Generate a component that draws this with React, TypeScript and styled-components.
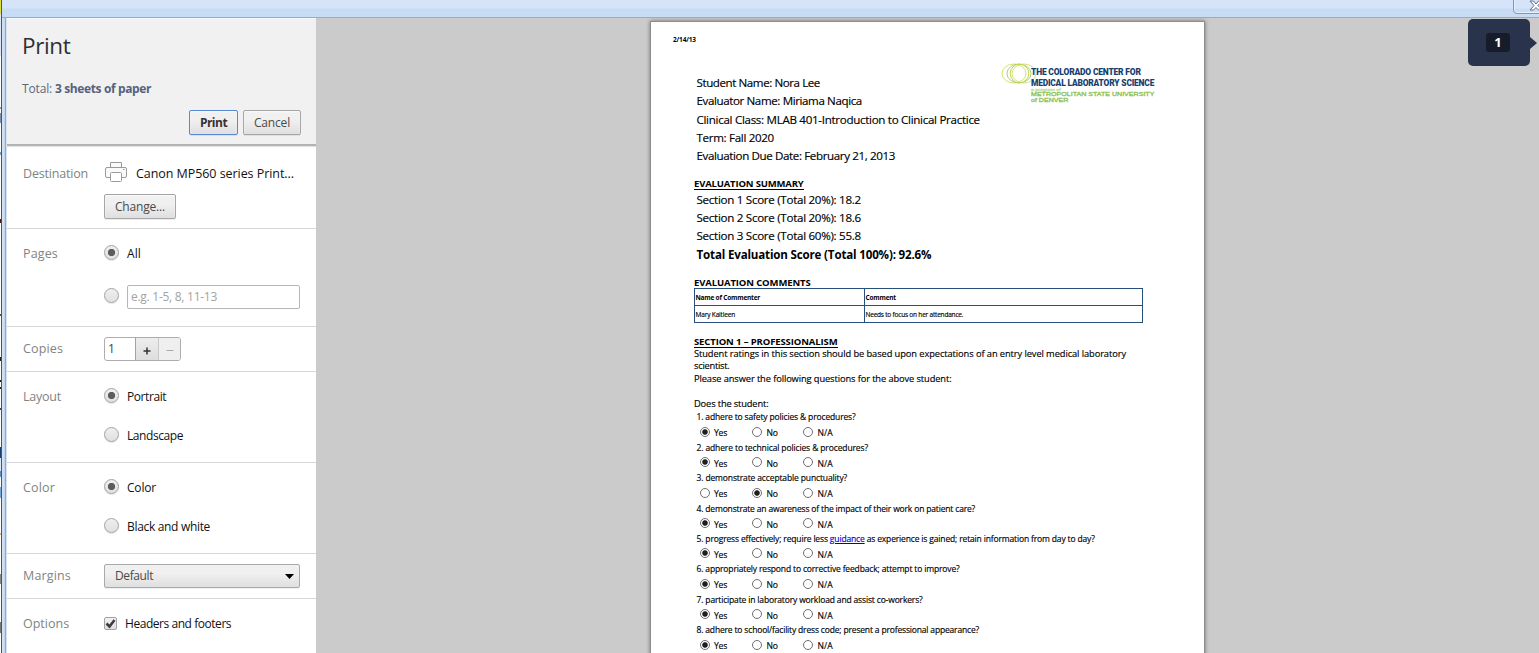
import React from 'react';
import styled, { createGlobalStyle, css } from 'styled-components';

const GlobalStyle = createGlobalStyle`
  * { box-sizing: border-box; }
  body { margin: 0; background: #fff; overflow: hidden; font-family: 'Open Sans', sans-serif; }
`;

/* ---------- window frame ---------- */

const Window = styled.div`
  position: relative;
  display: flex;
  width: 1539px;
  height: 653px;
  overflow: hidden;
`;

const Desktop = styled.div`
  flex: none;
  width: 1px;
  background: linear-gradient(
    #e0e33c 0 14px, #dfe8f2 14px 56px, #fff 56px 107px, #999 107px 109px, #fff 109px 113px,
    #7c8fa8 113px 123px, #fff 123px 152px, #7da0c8 152px 155px, #fff 155px 219px, #401a10 219px 223px,
    #fff 223px 314px, #555 314px 316px, #fff 316px 357px, #222 357px 361px, #fff 361px 380px, #222 380px 382px,
    #fff 382px 387px, #222 387px 389px, #fff 389px 408px, #44486a 408px 410px, #fff 410px 447px,
    #17406f 447px 458px, #dce8f4 458px 471px, #5d8fc2 471px 477px, #fff 477px 487px, #76a9d8 487px 498px,
    #fff 498px 533px, #e6b56d 533px 535px, #fff 535px 574px, #888 574px 584px, #fff 584px 622px, #777 622px 633px, #fff 633px
  );
`;

const Frame = styled.div`
  flex: 1;
  display: flex;
  flex-direction: column;
  min-width: 0;
  border-left: 1px solid #3c5878;
`;

const TitleBar = styled.div`
  flex: none;
  height: 18px;
  background: linear-gradient(#d5e4f8 0 8px, #c8dcf6 9px);
  border-bottom: 1px solid #97abc8;
`;

const Body = styled.div`
  flex: 1;
  display: flex;
  min-height: 0;
  padding-left: 5px;
  background: linear-gradient(90deg, #cfe0f4 0 2px, #c3d5ea 2px 3px, #8fabd0 3px 4px, #d3e1f2 4px 5px, #cbcbcb 5px);
`;

const CloseButton = styled.div`
  position: absolute;
  top: -4px;
  left: 1513px;
  width: 40px;
  height: 18px;
  border: 1px solid #8497b4;
  border-radius: 4px;
  box-shadow: inset 0 0 0 1px #e4effc;

  svg { position: absolute; left: 15px; top: 3px; }
`;

/* ---------- text ---------- */

interface TextProps { $size?: number; $ls?: number; $bold?: boolean; $color?: string; $lh?: number }

const Text = styled.span<TextProps>`
  display: inline-block;
  white-space: pre;
  font-size: ${p => p.$size ?? 12}px;
  line-height: ${p => p.$lh ?? 20}px;
  letter-spacing: ${p => p.$ls ?? 0}px;
  font-weight: ${p => (p.$bold ? 700 : 400)};
  color: ${p => p.$color ?? '#111'};
`;

/* ---------- print settings ---------- */

const Sidebar = styled.aside`
  flex: none;
  width: 309px;
  display: flex;
  flex-direction: column;
  background: #fff;
`;

const Header = styled.header`
  flex: none;
  height: 128px;
  padding: 12px 15px 0;
  background: #f1f1f1;
  border-top: 1px solid #f7f9fc;
  border-bottom: 2px solid #b3b3b3;
  box-shadow: 0 1px 1px #e4e4e4;
  display: flex;
  flex-direction: column;
`;

const Title = styled.h1`
  margin: 0;
  font-size: 22.500px;
  font-weight: 400;
  line-height: 30px;
  letter-spacing: -0.350px;
  color: #2f2f33;
`;

const Summary = styled.div`
  margin-top: 19px;
  height: 16px;
  display: flex;
  gap: 3px;
`;

const Actions = styled.div`
  display: flex;
  justify-content: flex-end;
  gap: 5px;
  margin-top: 14px;
`;

const Button = styled.button<{ $width: number; $primary?: boolean }>`
  width: ${p => p.$width}px;
  height: 25px;
  padding: 0;
  display: flex;
  align-items: center;
  justify-content: center;
  font-family: inherit;
  background: linear-gradient(#f0f0f0 38%, #dfdfdf);
  border: 1px solid ${p => (p.$primary ? '#5a86d6' : '#a6a6a6')};
  border-radius: 2px;
  box-shadow: 0 1px 0 rgba(0, 0, 0, 0.07), inset 0 1px 2px rgba(255, 255, 255, 0.75);
`;

const Section = styled.section<{ $height: number; $top: number }>`
  flex: none;
  height: ${p => p.$height}px;
  padding: ${p => p.$top}px 0 0 16px;
  display: grid;
  grid-template-columns: 81px 1fr;
  align-items: start;
  border-bottom: 1px solid #d8d8d8;
`;

const Label = styled.div<{ $offset?: number }>`
  display: flex;
  padding-top: ${p => p.$offset ?? 1}px;
`;

const Fields = styled.div<{ $gap: number }>`
  display: flex;
  flex-direction: column;
  gap: ${p => p.$gap}px;
`;

const Option = styled.label`
  display: flex;
  align-items: center;
  gap: 8px;
  height: 20px;

  > ${Text} { padding-top: 1px; }
`;

const Radio = styled.span<{ $on?: boolean }>`
  flex: none;
  width: 15px;
  height: 15px;
  margin-top: -1px;
  border: 1px solid #a3a3a3;
  border-radius: 50%;
  background: ${p => (p.$on ? 'radial-gradient(circle, #5c5c5c 0 3.3px, transparent 4px), ' : '')}
    linear-gradient(#efefef, #e0e0e0);
  box-shadow: 0 1px 1px rgba(0, 0, 0, 0.1);
`;

const RangeInput = styled.div`
  display: flex;
  align-items: center;
  width: 173px;
  height: 24px;
  padding: 0 3px;
  margin-top: 1px;
  border: 1px solid #b6b6b6;
  border-radius: 2px;
`;

const Stepper = styled.div`
  display: grid;
  grid-template-columns: 30px 23px 22px;
  width: 77px;
  height: 24px;
  border: 1px solid #adadad;
  border-radius: 3px;
  overflow: hidden;
`;

const StepValue = styled.div`
  display: flex;
  padding: 1px 3px 0;
`;

const Step = styled.div<{ $disabled?: boolean }>`
  display: flex;
  align-items: center;
  justify-content: center;
  padding-top: 3px;
  border-left: 1px solid ${p => (p.$disabled ? '#c9c9c9' : '#a3a3a3')};
  background: ${p => (p.$disabled ? '#efefef' : 'linear-gradient(#ededed, #dedede)')};
`;

const Select = styled.div`
  display: flex;
  justify-content: space-between;
  align-items: center;
  width: 196px;
  height: 24px;
  padding: 0 5px 0 10px;
  border: 1px solid #a9a9a9;
  border-radius: 2px;
  background: linear-gradient(#f0f0f0 38%, #dfdfdf);
  box-shadow: 0 1px 0 rgba(0, 0, 0, 0.06);
`;

const CheckBox = styled.span`
  flex: none;
  width: 13px;
  height: 13px;
  border: 1px solid #a3a3a3;
  border-radius: 2px;
  background: linear-gradient(#f1f1f1, #dfdfdf);
  svg { display: block; }
`;

const GREY = '#808482';

const PrinterIcon = () => (
  <svg width="24" height="22" viewBox="0 0 24 22" fill="#fafafa" stroke="#9a9a9a">
    <path d="M6.500 6V.5h11V6" />
    <path d="M3 5.500H21Q22.500 5.500 22.500 7V14Q22.500 15.500 21 15.500H3Q1.500 15.500 1.500 14V7Q1.500 5.500 3 5.500Z" />
    <rect x="6.500" y="10.500" width="11" height="9" rx="1" fill="#fff" />
    <path d="M19 7.500h1.500" />
  </svg>
);

/* ---------- preview ---------- */

const Preview = styled.main`
  flex: 1;
  background: #cbcbcb;
  padding: 4px 0 0 335px;
  overflow: hidden;
`;

const Sheet = styled.article`
  width: 553px;
  height: 720px;
  padding: 13px 0 0 43px;
  background: #fff;
  box-shadow: 0 0 0 1px #8d8d8d, 0 0 4px 1px rgba(0, 0, 0, 0.45);
`;

const Copy = styled(Text)`
  color: #000;
  -webkit-text-stroke: ${p => (p.$bold ? 0 : 0.15)}px #000;
`;

const PrintDate = styled.div`
  height: 10px;
  margin-left: -21px;
  display: flex;
`;

const Intro = styled.div`
  display: flex;
  margin-top: 29.200px;
  height: 91px;
`;

const Lines = styled.div`
  display: flex;
  flex-direction: column;
  align-items: flex-start;
`;

const InfoLines = styled(Lines)`
  flex: none;
  width: 307px;
  padding-left: 2.500px;
`;

const ScoreLines = styled(Lines)`
  margin-top: 1px;
  padding-left: 2.500px;
`;

const Logo = styled.div`
  display: flex;
  width: 160px;
  height: 42px;
  margin-top: -13.500px;
`;

const Rings = styled.svg`
  flex: none;
  width: 37px;
  height: 24px;
  margin-right: -7px;
`;

const LogoText = styled.div`
  display: flex;
  flex-direction: column;
  padding-top: 5.500px;
`;

const LogoName = styled.span<{ $stretch: number }>`
  height: 10.800px;
  font: 900 9.800px/11px Roboto, sans-serif;
  letter-spacing: -0.200px;
  color: #14406f;
  white-space: nowrap;
  transform: scaleX(${p => p.$stretch});
  transform-origin: left;
`;

const LogoSub = styled.span<{ $size: number; $height: number; $color: string }>`
  height: ${p => p.$height}px;
  font: 400 ${p => p.$size}px/${p => p.$height}px 'Liberation Sans', sans-serif;
  -webkit-text-stroke: 0.300px ${p => p.$color};
  color: ${p => p.$color};
  white-space: nowrap;
  transform: scaleX(1.22);
  transform-origin: left;
`;

const Heading = styled.h2<{ $ls: number; $top: number; $bottom?: number }>`
  width: max-content;
  height: 12px;
  margin: ${p => p.$top}px 0 ${p => p.$bottom ?? 0}px;
  font-size: 9.500px;
  line-height: 12px;
  font-weight: 700;
  letter-spacing: ${p => p.$ls}px;
  color: #000;
  border-bottom: 1px solid #000;
`;

const Comments = styled.div`
  display: grid;
  grid-template-columns: 170px 278px;
  grid-template-rows: 17px 17px;
  width: 449px;
  border: solid #28507c;
  border-width: 1px 0 0 1px;
`;

const Cell = styled.div`
  display: flex;
  padding-left: 0.500px;
  border: solid #28507c;
  border-width: 0 1px 1px 0;
`;

const Question = styled.div`
  height: 30.450px;
  padding-left: 2.500px;
`;

const QuestionText = styled.div`
  height: 14px;
  display: flex;
`;

const Choices = styled.div`
  display: grid;
  grid-template-columns: 52.500px 51px 40px;
  padding-left: 3px;
`;

const Choice = styled.div`
  display: flex;
  align-items: flex-start;
  height: 16px;
`;

const Dot = styled.span<{ $on: boolean }>`
  flex: none;
  width: 10px;
  height: 10px;
  margin: 2.500px 4.500px 0 0;
  border: 1px solid #6f6f6f;
  border-radius: 50%;
  ${p => p.$on && css`background: radial-gradient(circle, #1e1e1e 0 2.300px, #fff 3.200px);`}
`;

const Link = styled.a`
  color: #0000d8;
  -webkit-text-stroke-color: #0000d8;
  text-decoration: underline;
`;

const PageBadge = styled.div`
  position: absolute;
  left: 1468px;
  top: 19px;
  width: 62px;
  height: 47px;
  display: flex;
  align-items: center;
  justify-content: center;
  background: #29344c;
  border-radius: 5px;

  &::after {
    content: '';
    position: absolute;
    left: 100%;
    top: 18px;
    border: solid transparent;
    border-width: 6px 0 6px 7px;
    border-left-color: #29344c;
  }
`;

const PageNumber = styled.div`
  width: 24px;
  height: 19px;
  margin-left: -2px;
  text-align: center;
  font-size: 13px;
  line-height: 19px;
  font-weight: 700;
  color: #fff;
  background: #161c2a;
  border-radius: 3px;
`;

const info: [string, number][] = [
  ['Student Name: Nora Lee', -0.43],
  ['Evaluator Name: Miriama Naqica', -0.397],
  ['Clinical Class: MLAB 401-Introduction to Clinical Practice', -0.305],
  ['Term: Fall 2020', -0.32],
  ['Evaluation Due Date: February 21, 2013', -0.388],
];

const scores = [
  'Section 1 Score (Total 20%): 18.2',
  'Section 2 Score (Total 20%): 18.6',
  'Section 3 Score (Total 60%): 55.8',
];

const intro: [string, number][] = [
  ['Student ratings in this section should be based upon expectations of an entry level medical laboratory', -0.084],
  ['scientist.', -0.252],
  ['Please answer the following questions for the above student:', -0.103],
  [' ', 0],
  ['Does the student:', -0.14],
];

const questions: { text: React.ReactNode; ls: number; answer: number }[] = [
  { text: '1. adhere to safety policies & procedures?', ls: -0.147, answer: 0 },
  { text: '2. adhere to technical policies & procedures?', ls: -0.12, answer: 0 },
  { text: '3. demonstrate acceptable punctuality?', ls: -0.132, answer: 1 },
  { text: '4. demonstrate an awareness of the impact of their work on patient care?', ls: -0.166, answer: 0 },
  {
    text: <>5. progress effectively; require less <Link>guidance</Link> as experience is gained; retain information from day to day?</>,
    ls: -0.152,
    answer: 0,
  },
  { text: '6. appropriately respond to corrective feedback; attempt to improve?', ls: -0.148, answer: 0 },
  { text: '7. participate in laboratory workload and assist co-workers?', ls: -0.152, answer: 0 },
  { text: '8. adhere to school/facility dress code; present a professional appearance?', ls: -0.167, answer: 0 },
];

const choices: [string, number][] = [['Yes', -0.25], ['No', -0.1], ['N/A', 0.1]];

function Settings() {
  return (
    <Sidebar>
      <Header>
        <Title>Print</Title>
        <Summary>
          <Text $ls={-0.16} $lh={17} $color="#5b6880">Total:</Text>
          <Text $bold $ls={-0.38} $lh={17} $color="#55627d">3 sheets of paper</Text>
        </Summary>
        <Actions>
          <Button $width={49} $primary><Text $bold $ls={-0.5} $color="#333">Print</Text></Button>
          <Button $width={58}><Text $ls={-0.185} $color="#4a4a4a">Cancel</Text></Button>
        </Actions>
      </Header>

      <Section $height={83} $top={17}>
        <Label><Text $size={12.5} $ls={-0.19} $color={GREY}>Destination</Text></Label>
        <Fields $gap={11}>
          <Option><PrinterIcon /><Text $size={12.5} $ls={-0.06}>Canon MP560 series Print...</Text></Option>
          <Button $width={72}><Text $ls={-0.184} $color="#4a4a4a">Change...</Text></Button>
        </Fields>
      </Section>

      <Section $height={98} $top={14}>
        <Label><Text $size={12.5} $ls={0.15} $color={GREY}>Pages</Text></Label>
        <Fields $gap={23}>
          <Option><Radio $on /><Text $ls={0.1}>All</Text></Option>
          <Option><Radio /><RangeInput><Text $ls={-0.27} $color="#a3a3a3">e.g. 1-5, 8, 11-13</Text></RangeInput></Option>
        </Fields>
      </Section>

      <Section $height={45} $top={10}>
        <Label $offset={2}><Text $size={12.5} $ls={0.135} $color={GREY}>Copies</Text></Label>
        <Stepper>
          <StepValue><Text $color="#444">1</Text></StepValue>
          <Step><svg width="8" height="8"><path d="M.5 4h7M4 .5v7" stroke="#333" strokeWidth="1.500" /></svg></Step>
          <Step $disabled><svg width="8" height="8"><path d="M.5 3.500h7" stroke="#aaa" /></svg></Step>
        </Stepper>
      </Section>

      <Section $height={91} $top={14}>
        <Label><Text $size={12.5} $ls={-0.23} $color={GREY}>Layout</Text></Label>
        <Fields $gap={19}>
          <Option><Radio $on /><Text $ls={-0.42}>Portrait</Text></Option>
          <Option><Radio /><Text $ls={-0.42}>Landscape</Text></Option>
        </Fields>
      </Section>

      <Section $height={91} $top={14}>
        <Label><Text $size={12.5} $ls={0.16} $color={GREY}>Color</Text></Label>
        <Fields $gap={19}>
          <Option><Radio $on /><Text $ls={-0.19}>Color</Text></Option>
          <Option><Radio /><Text $ls={-0.32}>Black and white</Text></Option>
        </Fields>
      </Section>

      <Section $height={45} $top={10}>
        <Label $offset={2}><Text $size={12.5} $ls={0.16} $color={GREY}>Margins</Text></Label>
        <Select>
          <Text $ls={-0.4} $color="#4a4a4a">Default</Text>
          <svg width="9" height="5"><path d="M0 0h9L4.500 5z" fill="#000" /></svg>
        </Select>
      </Section>

      <Section $height={60} $top={14}>
        <Label><Text $size={12.5} $color={GREY}>Options</Text></Label>
        <Option>
          <CheckBox>
            <svg width="11" height="11"><path d="M1.500 5.500L4.500 8.500L9.500 2" fill="none" stroke="#3c3c3c" strokeWidth="2.500" /></svg>
          </CheckBox>
          <Text $ls={-0.45}>Headers and footers</Text>
        </Option>
      </Section>
    </Sidebar>
  );
}

function Document() {
  return (
    <Sheet>
      <PrintDate><Copy $size={6.5} $ls={-0.15} $lh={10} $bold>2/14/13</Copy></PrintDate>
      <Intro>
        <InfoLines>
          {info.map(([text, ls]) => <Copy key={text} $size={11.6} $ls={ls} $lh={18.25}>{text}</Copy>)}
        </InfoLines>
        <Logo>
          <Rings viewBox="0 0 37 24" fill="none" strokeWidth="1">
            <ellipse cx="13" cy="12.500" rx="12" ry="9.500" stroke="#d7e06a" />
            <ellipse cx="18" cy="12.500" rx="12" ry="9.500" stroke="#a9d08a" />
            <ellipse cx="23" cy="12.500" rx="12" ry="9.500" stroke="#dbe27a" />
            <circle cx="18.500" cy="12.500" r="9.300" stroke="#c3d648" />
          </Rings>
          <LogoText>
            <LogoName $stretch={0.86}>THE COLORADO CENTER FOR</LogoName>
            <LogoName $stretch={0.855}>MEDICAL LABORATORY SCIENCE</LogoName>
            <LogoSub $size={4.3} $height={4.5} $color="#c3dba0">a program of</LogoSub>
            <LogoSub $size={5.8} $height={5.5} $color="#8cc152">METROPOLITAN STATE UNIVERSITY</LogoSub>
            <LogoSub $size={5.8} $height={5} $color="#8cc152">of DENVER</LogoSub>
          </LogoText>
        </Logo>
      </Intro>

      <Heading $ls={-0.174} $top={12.55}>EVALUATION SUMMARY</Heading>
      <ScoreLines>
        {scores.map(text => <Copy key={text} $size={11.6} $ls={-0.29} $lh={18.25}>{text}</Copy>)}
        <Copy $bold $size={11.6} $ls={-0.18} $lh={19.5}>Total Evaluation Score (Total 100%): 92.6%</Copy>
      </ScoreLines>

      <Heading $ls={-0.124} $top={11.75} $bottom={-1}>EVALUATION COMMENTS</Heading>
      <Comments>
        <Cell><Copy $bold $size={6.5} $ls={-0.2} $lh={18}>Name of Commenter</Copy></Cell>
        <Cell><Copy $bold $size={6.5} $ls={-0.2} $lh={18}>Comment</Copy></Cell>
        <Cell><Copy $size={6.5} $ls={-0.15} $lh={18}>Mary Kaitleen</Copy></Cell>
        <Cell><Copy $size={6.5} $ls={-0.2} $lh={18}>Needs to focus on her attendance.</Copy></Cell>
      </Comments>

      <Heading $ls={-0.115} $top={13}>SECTION 1 – PROFESSIONALISM</Heading>
      <Lines>
        {intro.map(([text, ls], i) => <Copy key={i} $size={9.3} $ls={ls} $lh={12.5}>{text}</Copy>)}
      </Lines>
      {questions.map((q, i) => (
        <Question key={i}>
          <QuestionText><Copy $size={8.5} $ls={q.ls} $lh={14}>{q.text}</Copy></QuestionText>
          <Choices>
            {choices.map(([name, ls], n) => (
              <Choice key={name}>
                <Dot $on={q.answer === n} />
                <Copy $size={8.6} $ls={ls} $lh={19}>{name}</Copy>
              </Choice>
            ))}
          </Choices>
        </Question>
      ))}
    </Sheet>
  );
}

export default function App() {
  return (
    <>
      <GlobalStyle />
      <Window>
        <Desktop />
        <Frame>
          <TitleBar />
          <Body>
            <Settings />
            <Preview><Document /></Preview>
          </Body>
        </Frame>
        <CloseButton>
          <svg width="14" height="12" viewBox="0 0 14 12">
            <path d="M1 1h3.500L7 4l2.500-3H13L9 5.500l4 4.500H9.500L7 7.500 4.500 10H1l4-4.500z" fill="#fff" stroke="#5d6f8b" />
          </svg>
        </CloseButton>
        <PageBadge><PageNumber>1</PageNumber></PageBadge>
      </Window>
    </>
  );
}
